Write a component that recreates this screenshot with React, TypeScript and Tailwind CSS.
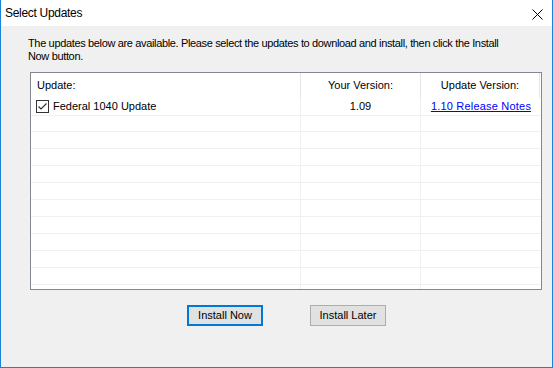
import React from 'react';

const rows = Array.from({ length: 11 });

const App: React.FC = () => {
  return (
    <div
      className="w-[553px] h-[368px] bg-[#f0f0f0] border-x border-b border-[#1883d7] flex flex-col text-black"
      style={{ fontFamily: '"Liberation Sans", Arial, sans-serif' }}
    >
      {/* Title bar */}
      <div className="h-[26px] bg-white flex items-center justify-between pl-[4px] pr-[9px] shrink-0">
        <span className="text-[12px] tracking-[-0.3px]">Select Updates</span>
        <svg width="11" height="11" viewBox="0 0 11 11" className="mt-[2px]">
          <path d="M0.5 0.5 L10.5 10.5 M10.5 0.5 L0.5 10.5" stroke="#000" strokeWidth="1" />
        </svg>
      </div>

      {/* Description */}
      <p className="pl-[27px] pt-[11px] text-[11px] leading-[12.5px] tracking-[-0.35px]">
        The updates below are available. Please select the updates to download and install, then click the Install
        <br />
        Now button.
      </p>

      {/* Update list */}
      <div className="ml-[29px] mt-[10px] w-[512px] h-[218px] border border-[#828790] bg-white overflow-hidden text-[11px]">
        <div className="grid grid-cols-[270px_120px_120px] h-[25px]">
          <div className="flex items-center pl-[6px] border-r border-[#e5e5e5]">Update:</div>
          <div className="flex items-center justify-center border-r border-[#e5e5e5]">Your Version:</div>
          <div className="flex items-center justify-center border-r border-[#e5e5e5] mr-[1px]">Update Version:</div>
        </div>

        <div className="grid grid-cols-[270px_120px_120px] h-[17px]">
          <div className="flex items-center pl-[5px] border-r border-b border-[#f0f0f0]">
            <span className="w-[13px] h-[13px] border border-[#333] flex items-center justify-center mr-[4px]">
              <svg width="11" height="11" viewBox="0 0 11 11">
                <path d="M1.5 5.5 L4 8 L9.5 2.5" stroke="#333" strokeWidth="1.2" fill="none" />
              </svg>
            </span>
            Federal 1040 Update
          </div>
          <div className="flex items-center justify-center border-r border-b border-[#f0f0f0]">1.09</div>
          <div className="flex items-center justify-center border-b border-[#f0f0f0]">
            <span className="text-[#0000ff] underline tracking-[0.2px]">1.10 Release Notes</span>
          </div>
        </div>

        {rows.map((_, i) => (
          <div key={i} className="grid grid-cols-[270px_120px_120px] h-[17px]">
            <div className="border-r border-b border-[#f0f0f0]" />
            <div className="border-r border-b border-[#f0f0f0]" />
            <div className="border-b border-[#f0f0f0]" />
          </div>
        ))}
      </div>

      {/* Buttons */}
      <div className="flex gap-[47px] pl-[186px] mt-[15px] text-[11px]">
        <button className="w-[76px] h-[21px] bg-[#e1e1e1] border-2 border-[#0078d7] flex items-center justify-center">
          Install Now
        </button>
        <button className="w-[76px] h-[21px] bg-[#e1e1e1] border border-[#adadad] flex items-center justify-center">
          Install Later
        </button>
      </div>
    </div>
  );
};

export default App;
